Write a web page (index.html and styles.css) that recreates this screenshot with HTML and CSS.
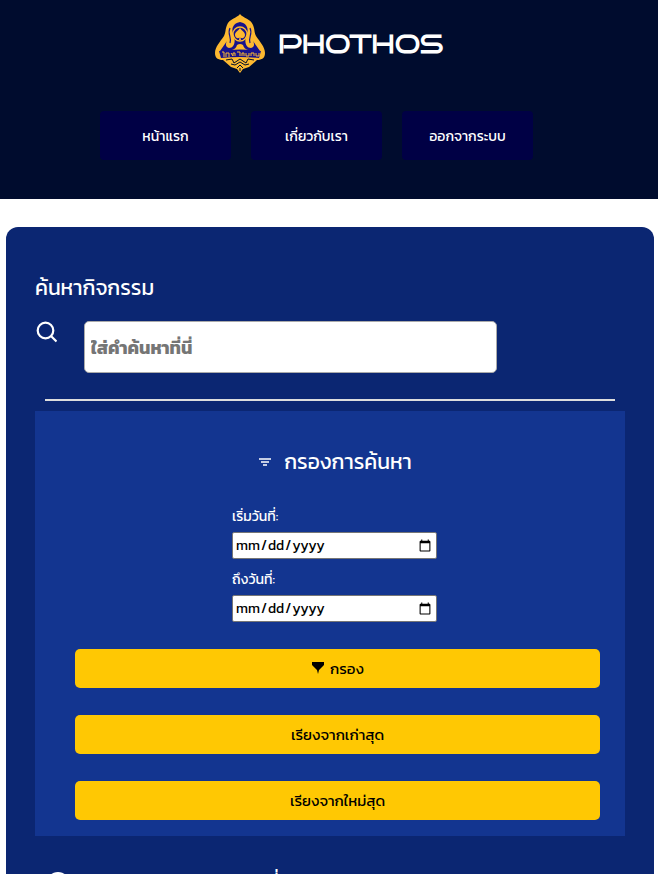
FILE: index.html
```html
<!DOCTYPE html>
<html lang="th">
<head>
<meta charset="utf-8">
<meta name="viewport" content="width=device-width, initial-scale=1">
<title>PHOTHOS</title>
<link rel="stylesheet" href="styles.css">
</head>
<body>
<header class="site-header">
  <div class="brand">
    <svg class="brand-logo" viewBox="0 0 50 60" aria-hidden="true">
      <path fill="#fdb930" d="M25 0C22 4 14 5 12 11C10 16 11 18 9 22C5 28 0 33 0 39C0 44 3 46 8 46L16 53L22 55L25 59L28 55L34 53L42 46C47 46 50 44 50 39C50 33 45 28 41 22C39 18 40 16 38 11C36 5 28 4 25 0Z"/>
      <path fill="#17128c" d="M25 8C19 9 16 14 18 19C21 26 20 34 14 34C11 34 10 30 12 27L5 37H45L38 27C40 30 39 34 36 34C30 34 29 26 32 19C34 14 31 9 25 8Z"/>
      <path fill="none" stroke="#17128c" stroke-width="1.200" d="M15 14C12 20 17 23 15 29M35 14C38 20 33 23 35 29"/>
      <circle cx="25" cy="20" r="7" fill="#17128c" stroke="#fdb930" stroke-width="1.300"/>
      <path fill="#fdb930" d="M25 14C23 17 20 18 20 21C20 24 23 25 24.500 23.500L24 26H26L25.500 23.500C27 25 30 24 30 21C30 18 27 17 25 14ZM17 36Q21 35 22 31Q25 29 28 31Q29 35 33 36Z"/>
      <path fill="#17128c" d="M4 37Q25 34 46 37L44 44Q25 42 6 44Z"/>
      <path fill="none" stroke="#fdb930" stroke-width="1" d="M7 38H9V43M11 43V39H14V43M16 39L18 42V39H20V42M22 38H25V42M27 42V39H29V42M31 39V42H34V39M36 42V39H39V42M41 39V42H44V39"/>
      <path fill="none" stroke="#000c2e" stroke-width="1" d="M11 46L17 45L19 49L25 45L31 49L33 45L39 46M16 50L20 51L25 48L30 51L34 50M22 54L25 51L28 54M25 54V57"/>
    </svg>
    <span class="brand-name">PHOTHOS</span>
  </div>
  <nav class="nav">
    <a class="nav-link" href="#home">หน้าแรก</a>
    <a class="nav-link" href="#about">เกี่ยวกับเรา</a>
    <a class="nav-link" href="#logout">ออกจากระบบ</a>
  </nav>
</header>
<main class="panel">
  <h1 class="title"><label for="q">ค้นหากิจกรรม</label></h1>
  <form class="search" role="search">
    <svg class="search-icon" viewBox="0 0 22 22" aria-hidden="true"><circle cx="10.500" cy="9.500" r="7.800"/><path d="M16 15L21.500 20.500"/></svg>
    <input class="search-input" id="q" type="search" placeholder="ใส่คำค้นหาที่นี่">
  </form>
  <hr class="rule">
  <form class="filter">
    <h2 class="filter-title">
      <svg class="filter-icon" viewBox="0 0 12 10" aria-hidden="true"><path d="M0 2H12M2 5H10M4 8H8"/></svg>
      กรองการค้นหา
    </h2>
    <div class="dates">
      <label class="date-label" for="from">เริ่มวันที่:</label>
      <input class="date" id="from" type="date">
      <label class="date-label" for="to">ถึงวันที่:</label>
      <input class="date" id="to" type="date">
    </div>
    <button class="btn" type="submit">
      <svg class="funnel" viewBox="0 0 14 14" aria-hidden="true"><path d="M1 0H13V3L8 8L7 12L6 8L1 3Z"/></svg>
      กรอง
    </button>
    <button class="btn" type="button">เรียงจากเก่าสุด</button>
    <button class="btn" type="button">เรียงจากใหม่สุด</button>
  </form>
  <h2 class="results-title">
    <svg class="results-icon" viewBox="0 0 22 22" aria-hidden="true"><circle cx="11" cy="11" r="11"/></svg>
    รายการกรองกิจกรรมที่
  </h2>
</main>
</body>
</html>
```

FILE: styles.css
```css
* { box-sizing: border-box; }

body {
  margin: 0;
  background: #fff;
  color: #fff;
  font-family: Kanit, "Noto Sans Thai", "Noto Sans", sans-serif;
  font-size: 14px;
}

.site-header {
  background: #000c2e;
  padding: 14px 0 39px;
}

.brand {
  display: flex;
  justify-content: center;
  align-items: center;
  gap: 13px;
  height: 60px;
}

.brand-logo { width: 50px; height: 60px; }

.brand-name {
  font-family: "Bruno Ace", Orbitron, "DejaVu Sans", sans-serif;
  font-size: 26px;
  font-weight: 700;
}

.nav {
  display: flex;
  justify-content: center;
  gap: 20px;
  padding-right: 25px;
  margin-top: 37px;
}

.nav-link {
  width: 131px;
  height: 49px;
  line-height: 51px;
  border-radius: 4px;
  background: #000045;
  color: #fff;
  text-align: center;
  text-decoration: none;
}

.panel {
  margin: 28px 4px 0 6px;
  padding: 41px 29px;
  border-radius: 12px;
  background: #0b2672;
}

.title {
  margin: 0;
  font-size: 21px;
  line-height: 40px;
  font-weight: 400;
}

.search {
  display: flex;
  gap: 27px;
  margin-top: 13px;
}

.search-icon {
  width: 22px;
  height: 22px;
  fill: none;
  stroke: #fff;
  stroke-width: 2.2;
}

.search-input {
  width: 70%;
  height: 52px;
  padding: 0 6px;
  border: 1px solid #aaa;
  border-radius: 5px;
  font: 700 18px Kanit, "Noto Sans Thai", "Noto Sans", sans-serif;
}

.search-input::placeholder { color: #757575; }

.rule {
  height: 2px;
  margin: 26px 10px 10px;
  border: 0;
  background: #ddd;
}

.filter {
  padding: 31px 25px 16px 40px;
  background: #133590;
}

.filter-title {
  display: flex;
  justify-content: center;
  align-items: center;
  gap: 13px;
  margin: 0;
  padding-right: 4px;
  font-size: 21px;
  line-height: 40px;
  font-weight: 400;
}

.filter-icon {
  width: 12px;
  height: 10px;
  fill: none;
  stroke: #fff;
  stroke-width: 1.5;
}

.dates {
  display: grid;
  width: 211px;
  padding-right: 6px;
  margin: 19px auto 22px;
}

.date-label { line-height: 31px; }

.date {
  height: 27px;
  margin-bottom: 5px;
  padding: 0 2px;
  border: 1px solid #767676;
  border-radius: 2px;
  background: #fff;
  color: #000;
  font-family: Kanit, "Noto Sans", sans-serif;
  font-size: 14px;
}

.btn {
  display: flex;
  justify-content: center;
  align-items: center;
  gap: 5px;
  width: 100%;
  height: 39px;
  margin-bottom: 27px;
  border: 0;
  border-radius: 5px;
  background: #ffc803;
  color: #000;
  font: 400 15px Kanit, "Noto Sans Thai", "Noto Sans", sans-serif;
}

.btn:last-child { margin-bottom: 0; }

.funnel { width: 14px; height: 14px; }

.results-title {
  display: flex;
  align-items: center;
  gap: 13px;
  margin: 26px 0 0 12px;
  font-size: 21px;
  line-height: 42px;
  font-weight: 400;
}

.results-icon { width: 22px; height: 22px; fill: #fff; }
```
